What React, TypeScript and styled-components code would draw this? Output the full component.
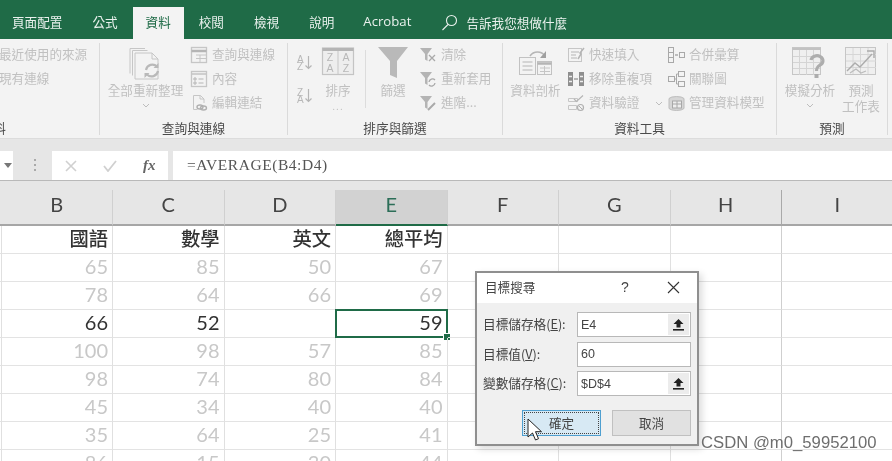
import React from "react";
import styled, { createGlobalStyle } from "styled-components";

const CJK = `"Noto Sans CJK TC", "Noto Sans CJK SC", sans-serif`;
const GREEN = "#1f6b47";
const ICON = "#c6c6c6";

const Global = createGlobalStyle`
  html, body { margin: 0; padding: 0; background: #fff; }
  * { box-sizing: border-box; }
`;

const Screen = styled.div`
  position: relative;
  width: 892px;
  height: 461px;
  overflow: hidden;
  background: #fff;
  font-family: ${CJK};
  filter: blur(0.45px);
`;

/* ---------- tabs ---------- */
const TabBar = styled.div`
  display: flex;
  align-items: flex-end;
  height: 39px;
  background: ${GREEN};
`;
const Tab = styled.div<{ $active?: boolean }>`
  height: ${(p) => (p.$active ? 32 : 39)}px;
  line-height: ${(p) => (p.$active ? 29 : 43)}px;
  padding: 0 ${(p) => (p.$active ? 13 : 15)}px;
  font-size: 12.6px;
  color: ${(p) => (p.$active ? GREEN : "#e9f1ed")};
  background: ${(p) => (p.$active ? "#f3f3f3" : "transparent")};
  white-space: nowrap;
  &:first-child { padding-left: 12px; }
`;
const AcrobatTab = styled(Tab)`
  padding-left: 14px;
  padding-right: 15px;
  font-family: "Open Sans", sans-serif;
  font-size: 13.2px;
`;
const SearchTab = styled.div`
  display: flex;
  align-items: center;
  gap: 8px;
  height: 39px;
  padding: 5px 0 0 15px;
  font-size: 12.6px;
  color: #e9f1ed;
`;

/* ---------- ribbon ---------- */
const Ribbon = styled.div`
  display: flex;
  height: 100px;
  padding-top: 4px;
  background: #f3f3f3;
  border-bottom: 1px solid #dcdcdc;
  overflow: hidden;
`;
const GroupBox = styled.div<{ $w: number; $ml?: number }>`
  flex: none;
  width: ${(p) => p.$w}px;
  margin-left: ${(p) => p.$ml ?? 0}px;
  height: 92px;
  border-right: 1px solid #dadada;
`;
const GroupBody = styled.div`
  display: flex;
  align-items: flex-start;
  height: 77px;
`;
const GroupLabel = styled.div`
  height: 15px;
  line-height: 15px;
  text-align: center;
  font-size: 12.7px;
  color: #4a4a4a;
  white-space: nowrap;
`;
const BigButton = styled.div<{ $w: number; $ml: number }>`
  flex: none;
  display: flex;
  flex-direction: column;
  align-items: center;
  width: ${(p) => p.$w}px;
  margin-left: ${(p) => p.$ml}px;
  padding-top: 4px;
  font-size: 12.6px;
  line-height: 16px;
  color: #c0c0c0;
  white-space: nowrap;
`;
const BigIcon = styled.div`
  display: flex;
  justify-content: center;
  height: 35px;
`;
const BigLine = styled.div`
  text-align: center;
`;
const Chevron = styled.svg`
  display: block;
  margin-top: 5px;
`;
const Dots = styled.div`
  height: 16px;
  letter-spacing: 1px;
  font-size: 10px;
  color: #c0c0c0;
`;
const ToolList = styled.div<{ $ml: number; $w?: number }>`
  flex: none;
  margin-left: ${(p) => p.$ml}px;
  ${(p) => (p.$w ? `width: ${p.$w}px;` : "")}
`;
const ToolRow = styled.div`
  display: flex;
  align-items: center;
  gap: 5px;
  height: 24px;
  padding-bottom: 3px;
  font-size: 12.6px;
  color: #c0c0c0;
  white-space: nowrap;
`;
const ToolIcon = styled.div`
  flex: none;
  display: flex;
  width: 16px;
  height: 16px;
  margin-top: 3px;
`;
const SortColumn = styled.div`
  flex: none;
  display: flex;
  flex-direction: column;
  gap: 18px;
  margin-left: 9px;
  padding-top: 12px;
`;
const Divider = styled.div`
  flex: none;
  width: 1px;
  height: 58px;
  margin: 7px 0 0 11px;
  background: #dcdcdc;
`;
const RowChevron = styled.svg`
  margin: 3px 0 0 11px;
`;

/* ---------- formula bar ---------- */
const FormulaArea = styled.div`
  display: flex;
  height: 42px;
  padding-top: 12px;
  background: #e6e6e6;
  border-bottom: 1px solid #b9b9b9;
`;
const NameBox = styled.div`
  flex: none;
  display: flex;
  align-items: center;
  justify-content: flex-end;
  width: 13px;
  padding-right: 1px;
  background: #fff;
`;
const Grip = styled.div`
  flex: none;
  width: 2px;
  height: 14px;
  margin: 8px 16px 0 21px;
  background: repeating-linear-gradient(#a9a9a9 0 2px, transparent 2px 5px);
`;
const FnBox = styled.div`
  flex: none;
  display: flex;
  align-items: center;
  width: 116px;
  height: 29px;
  padding-left: 13px;
  gap: 26px;
  background: #fff;
`;
const FxLabel = styled.span`
  font-family: "Liberation Serif", serif;
  font-style: italic;
  font-size: 15px;
  font-weight: 700;
  color: #666;
`;
const FormulaInput = styled.div`
  flex: 1;
  height: 29px;
  margin-left: 5px;
  padding-left: 14px;
  background: #fff;
  font-family: "Liberation Serif", serif;
  font-size: 15.5px;
  letter-spacing: 0.55px;
  line-height: 28px;
  color: #555;
  white-space: nowrap;
`;

/* ---------- sheet ---------- */
const columns = "1.5px repeat(8, 111.5px)";
const HeaderRow = styled.div`
  display: grid;
  grid-template-columns: ${columns};
  height: 45px;
  padding-top: 9px;
  background: #e6e6e6;
  border-bottom: 2px solid #a6a6a6;
`;
const HeaderCell = styled.div<{ $active?: boolean; $dark?: boolean }>`
  height: 36px;
  margin-bottom: -2px;
  text-align: center;
  font-family: Lato, sans-serif;
  font-size: 20px;
  line-height: 29px;
  color: ${(p) => (p.$active ? "#2c6e58" : "#444")};
  background: ${(p) => (p.$active ? "#d2d2d2" : "transparent")};
  border-right: 1px solid ${(p) => (p.$dark ? "#a9a9a9" : "#d0d0d0")};
  border-bottom: 2px solid ${(p) => (p.$active ? GREEN : "#a6a6a6")};
`;
const Sheet = styled.div`
  display: grid;
  grid-template-columns: ${columns};
  grid-auto-rows: 28px;
`;
const EdgeCell = styled.div`
  border-right: 1px solid #e0e0e0;
  border-bottom: 1px solid #e3e3e3;
`;
const Cell = styled.div<{ $tone: "title" | "dark" | "dim"; $selected?: boolean; $dark?: boolean }>`
  position: relative;
  padding-right: 4px;
  text-align: right;
  white-space: nowrap;
  font-family: ${(p) => (p.$tone === "title" ? CJK : "Lato, sans-serif")};
  font-size: ${(p) => (p.$tone === "title" ? 19.3 : 20)}px;
  font-weight: ${(p) => (p.$tone === "title" ? 500 : 400)};
  line-height: 24px;
  color: ${(p) => (p.$tone === "dim" ? "#c8c8c8" : "#333")};
  border-right: 1px solid ${(p) => (p.$dark ? "#cfcfcf" : "#e0e0e0")};
  border-bottom: 1px solid #e3e3e3;
  ${(p) =>
    p.$selected
      ? `
    &::before { content: ""; position: absolute; inset: -1px -1px -1px -1px; border: 2px solid ${GREEN}; }
    &::after { content: ""; position: absolute; right: -4px; bottom: -4px; width: 6px; height: 6px; background: ${GREEN}; border: 1px solid #fff; }
  `
      : ""}
`;

/* ---------- dialog ---------- */
const Dialog = styled.div`
  position: absolute;
  left: 475px;
  top: 271px;
  width: 224px;
  height: 175px;
  background: #f0f0f0;
  border: 2px solid #8f8f8f;
  box-shadow: 3px 3px 7px rgba(0, 0, 0, 0.14);
`;
const DialogTitle = styled.div`
  position: relative;
  height: 30px;
  padding-left: 8px;
  background: #fff;
  font-size: 12.6px;
  line-height: 28px;
  color: #444;
`;
const TitleHelp = styled.span`
  position: absolute;
  left: 144px;
  top: 0;
  font-family: "Liberation Sans", sans-serif;
  font-size: 14px;
  color: #444;
`;
const TitleClose = styled.svg`
  position: absolute;
  left: 190px;
  top: 8px;
`;
const DialogForm = styled.div`
  display: flex;
  flex-direction: column;
  gap: 4.5px;
  padding: 9px 6px 0 6px;
`;
const FormRow = styled.div`
  display: flex;
  align-items: center;
  height: 25px;
`;
const FormLabel = styled.div`
  flex: none;
  width: 94px;
  padding-bottom: 2px;
  font-size: 12.7px;
  letter-spacing: -0.05px;
  color: #444;
  white-space: nowrap;
`;
const Field = styled.div`
  flex: 1;
  display: flex;
  align-items: center;
  height: 25px;
  padding: 0 1px 0 3px;
  background: #fff;
  border: 1px solid #b8b8b8;
  font-family: "Liberation Sans", sans-serif;
  font-size: 12.5px;
  color: #444;
`;
const FieldText = styled.span`
  flex: 1;
`;
const RefButton = styled.div`
  flex: none;
  display: flex;
  align-items: center;
  justify-content: center;
  width: 21px;
  height: 21px;
  background: #ececec;
`;
const DialogButtons = styled.div`
  display: flex;
  justify-content: flex-end;
  gap: 11px;
  margin-top: 14px;
  padding-right: 6px;
`;
const DialogButton = styled.div<{ $primary?: boolean }>`
  position: relative;
  width: 79px;
  height: 26px;
  text-align: center;
  font-size: 12.6px;
  line-height: 24px;
  color: #444;
  background: ${(p) => (p.$primary ? "#d7e9f4" : "#e1e1e1")};
  border: ${(p) => (p.$primary ? "1.5px solid #4f9fd0" : "1px solid #c0c0c0")};
  ${(p) =>
    p.$primary
      ? `&::before { content: ""; position: absolute; inset: 1px; border: 1px dotted #444; }`
      : ""}
`;
const Pointer = styled.svg`
  position: absolute;
  left: 527px;
  top: 418px;
`;
const Watermark = styled.div`
  position: absolute;
  left: 701px;
  top: 433px;
  font-family: "Liberation Sans", sans-serif;
  font-size: 16.7px;
  line-height: 20px;
  color: #6e6e6e;
  text-shadow: 0 0 2px #fff;
  white-space: nowrap;
`;

/* ---------- icons ---------- */
const Svg = ({ w = 16, h = 16, children }: { w?: number; h?: number; children: React.ReactNode }) => (
  <svg width={w} height={h} viewBox={`0 0 ${w} ${h}`} fill="none" stroke={ICON} strokeWidth="1" overflow="visible">
    {children}
  </svg>
);
const Chev = () => (
  <Chevron width="8" height="5" viewBox="0 0 8 5" fill="none" stroke="#bdbdbd">
    <path d="M1 1l3 3 3-3" />
  </Chevron>
);
const RefreshIcon = () => (
  <Svg w={34} h={35}>
    <path d="M1 1.5h15M1 1.5v25M3.5 3.5h15M3.5 3.5v25M6 6h17l6 6v20H6z" fill="#f3f3f3" />
    <path d="M23 6v6h6" />
    <path d="M17 23a6.500 6.500 0 0 1 11-3.500M29 24a6.500 6.500 0 0 1-11 3.500" stroke="#b9b9b9" strokeWidth="2.2" />
    <path d="M29.500 16v5h-5zM15.500 31v-5h5z" fill="#b9b9b9" stroke="none" />
  </Svg>
);
const QueryIcon = () => (
  <Svg>
    <rect x=".5" y=".5" width="15" height="15" strokeWidth="1.3" />
    <path d="M.5 4h15" stroke="#b5b5b5" strokeWidth="2.5" />
    <path d="M5 8h10M5 11.5h10M9 8v7" />
  </Svg>
);
const PropsIcon = () => (
  <Svg>
    <rect x=".5" y=".5" width="15" height="15" strokeWidth="1.3" />
    <path d="M1 3h14" strokeWidth="1.6" />
    <path d="M3 7h2v2H3zM3 11h2v2H3zM7.5 8h5M7.5 12h5" stroke="#b5b5b5" />
  </Svg>
);
const LinkIcon = () => (
  <Svg>
    <path d="M2.5.5h7l3.5 3.5v4M2.5.5v14h4" />
    <path d="M9 .5V4h4" />
    <ellipse cx="9" cy="12" rx="3" ry="2" stroke="#b0b0b0" strokeWidth="1.4" />
    <ellipse cx="12.5" cy="13" rx="3" ry="2" stroke="#b0b0b0" strokeWidth="1.4" />
  </Svg>
);
const sortText = { fontFamily: "Liberation Sans, sans-serif", fontSize: 10, fill: "#b8b8b8", stroke: "none" };
const SortIcon = ({ top, bottom }: { top: string; bottom: string }) => (
  <Svg w={17} h={15}>
    <text x="0" y="7.5" style={sortText}>{top}</text>
    <text x="0" y="15" style={sortText}>{bottom}</text>
    <path d="M11.5 1v12.500M8.500 10.500l3 3 3-3" stroke="#b5b5b5" strokeWidth="1.2" />
  </Svg>
);
const SortBoxIcon = () => (
  <Svg w={32} h={28}>
    <rect x=".5" y="1" width="31" height="26.5" fill="#eee" stroke="#c4c4c4" strokeWidth="1.2" />
    <path d="M.5 2.500h31" stroke="#b5b5b5" strokeWidth="3" />
    <path d="M16 4v23" />
    <text x="8" y="14" textAnchor="middle" style={{ ...sortText, fontSize: 10.5 }}>Z</text>
    <text x="8" y="25" textAnchor="middle" style={{ ...sortText, fontSize: 10.5 }}>A</text>
    <text x="24" y="14" textAnchor="middle" style={{ ...sortText, fontSize: 10.5 }}>A</text>
    <text x="24" y="25" textAnchor="middle" style={{ ...sortText, fontSize: 10.5 }}>Z</text>
  </Svg>
);
const FunnelIcon = () => (
  <Svg w={30} h={31}>
    <path d="M0 0h30L19 14v17l-7-3V14z" fill="#b9b9b9" stroke="none" />
  </Svg>
);
const SmallFunnel = ({ children }: { children: React.ReactNode }) => (
  <Svg>
    <path d="M0 1h12L7.500 7v7L5 12.500V7z" fill="#b4b4b4" stroke="none" />
    {children}
  </Svg>
);
const TextToColumnsIcon = () => (
  <Svg w={33} h={28}>
    <path d="M11 9a9 9 0 0 1 15 0" stroke="#b5b5b5" strokeWidth="1.6" />
    <path d="M27 4v7h-6z" fill="#9f9f9f" stroke="none" />
    <rect x=".5" y="10.5" width="16" height="17" fill="#f3f3f3" stroke="#c2c2c2" />
    <path d="M3.500 15h10M3.500 19h10M3.500 23h10" stroke="#b5b5b5" />
    <rect x="18.5" y="14.5" width="14" height="13" stroke="#c2c2c2" />
    <path d="M18.500 16.500h14" stroke="#b5b5b5" strokeWidth="2.5" />
    <path d="M21 21h10M21 24.500h10M25.500 19v8" />
  </Svg>
);
const FlashFillIcon = () => (
  <Svg>
    <rect x=".5" y="1.5" width="13" height="13" />
    <path d="M3 5h8M3 8h5M3 11h6" stroke="#b5b5b5" />
    <path d="M16 1l-4 5 1 1-3 5" stroke="#b5b5b5" strokeWidth="1.5" />
  </Svg>
);
const DupesIcon = () => (
  <Svg>
    <rect x="0" y="1" width="5" height="14" fill="#8e8e8e" stroke="none" />
    <rect x="11" y="1" width="5" height="14" fill="#8e8e8e" stroke="none" />
    <path d="M1 5.500h3M1 10.500h3M12 5.500h3M12 10.500h3" stroke="#eee" strokeWidth="1.5" />
    <path d="M6 8h4" stroke="#9a9a9a" strokeWidth="1.4" />
  </Svg>
);
const ValidateIcon = () => (
  <Svg>
    <path d="M.5 3.500h9v3h-9zM.5 10.500h8v4h-8z" />
    <path d="M6 4l2.500 2.500L15 .5" stroke="#b5b5b5" strokeWidth="1.2" />
    <circle cx="12.5" cy="12.5" r="3" stroke="#b0b0b0" strokeWidth="1.2" />
    <path d="M10.500 10.500l4 4" stroke="#b0b0b0" />
  </Svg>
);
const ConsolidateIcon = () => (
  <Svg w={17} h={16}>
    <rect x=".5" y=".5" width="5" height="15" stroke="#a8a8a8" />
    <path d="M1 5.500h4M1 10.500h4" stroke="#a8a8a8" />
    <path d="M7 8h3" stroke="#999" strokeWidth="1.2" />
    <rect x="11.5" y="5.5" width="5" height="5" stroke="#a8a8a8" />
  </Svg>
);
const RelationIcon = () => (
  <Svg w={17} h={16}>
    <rect x=".5" y="5.5" width="6" height="5" stroke="#a8a8a8" />
    <rect x="10.5" y=".5" width="6" height="5" stroke="#a8a8a8" />
    <rect x="10.5" y="10.5" width="6" height="5" stroke="#a8a8a8" />
    <path d="M6.500 8h2v-5h2M8.500 8v5h2" stroke="#a8a8a8" />
  </Svg>
);
const ModelIcon = () => (
  <Svg w={17} h={17}>
    <path d="M1 3.500a8 3 0 0 1 15 0v10a8 3 0 0 1-15 0z" fill="#d6d6d6" stroke="#bcbcbc" />
    <rect x="4.5" y="6" width="9" height="7" fill="#eee" stroke="#a8a8a8" />
    <path d="M4.500 9h9M9 6v7" stroke="#a8a8a8" />
  </Svg>
);
const WhatIfIcon = () => (
  <Svg w={36} h={33}>
    <rect x=".5" y=".5" width="28" height="27" fill="#efefef" stroke="#c6c6c6" />
    <path d="M.5 2h28" stroke="#c2c2c2" strokeWidth="2" />
    <path d="M7.500 3v25M14.500 3v25M21.500 3v25M1 9.500h27M1 15.500h27M1 21.500h27" stroke="#d4d4d4" />
    <path d="M19 13a6 5 0 1 1 9 5c-3 2-3.500 3-3.500 6" stroke="#adadad" strokeWidth="3.2" />
    <rect x="22.5" y="27" width="4" height="4" fill="#adadad" stroke="none" />
  </Svg>
);
const ForecastIcon = () => (
  <Svg w={32} h={28}>
    <rect x=".5" y=".5" width="30" height="27" fill="#efefef" stroke="#c6c6c6" />
    <path d="M8 1v26M15.500 1v26M23 1v26M1 7.500h30M1 14h30M1 20.500h30" stroke="#d6d6d6" />
    <path d="M2 24l8-8 5 4 12-13" stroke="#acacac" strokeWidth="1.4" />
    <path d="M22 4h7v7" stroke="#acacac" strokeWidth="1.4" />
    <path d="M5 26l6-4 5 4 5-2" stroke="#bbb" strokeWidth="1.2" />
  </Svg>
);

/* ---------- data ---------- */
const heads = ["B", "C", "D", "E", "F", "G", "H", "I"];
const titles = ["國語", "數學", "英文", "總平均"];
const rows = [
  ["65", "85", "50", "67"],
  ["78", "64", "66", "69"],
  ["66", "52", "", "59"],
  ["100", "98", "57", "85"],
  ["98", "74", "80", "84"],
  ["45", "34", "40", "40"],
  ["35", "64", "25", "41"],
  ["86", "15", "30", "44"],
];

const Group = ({ w, ml, label, children }: { w: number; ml?: number; label: string; children: React.ReactNode }) => (
  <GroupBox $w={w} $ml={ml}>
    <GroupBody>{children}</GroupBody>
    <GroupLabel>{label}</GroupLabel>
  </GroupBox>
);

const Tool = ({ icon, children }: { icon: React.ReactNode; children: React.ReactNode }) => (
  <ToolRow>
    <ToolIcon>{icon}</ToolIcon>
    {children}
  </ToolRow>
);

const UpArrow = () => (
  <svg width="11" height="12" viewBox="0 0 11 12">
    <path d="M5.500 0L10.500 5H7.500V8.500H3.500V5H.5z" fill="#222" />
    <rect x="0" y="10" width="11" height="1.6" fill="#222" />
  </svg>
);

const GridRow = ({ cells, tone }: { cells: string[]; tone: "title" | "dark" | "dim" }) => (
  <>
    <EdgeCell />
    {cells.map((c, i) => (
      <Cell key={i} $tone={tone} $selected={tone === "dark" && i === 3}>
        {c}
      </Cell>
    ))}
    {[4, 5, 6, 7].map((i) => (
      <Cell key={i} $tone="dim" $dark={i === 6} />
    ))}
  </>
);

export default function App() {
  return (
    <Screen>
      <Global />
      <TabBar>
        <Tab>頁面配置</Tab>
        <Tab>公式</Tab>
        <Tab $active>資料</Tab>
        <Tab>校閱</Tab>
        <Tab>檢視</Tab>
        <Tab>說明</Tab>
        <AcrobatTab>Acrobat</AcrobatTab>
        <SearchTab>
          <svg width="17" height="17" viewBox="0 0 17 17" fill="none" stroke="#e9f1ed" strokeWidth="1.1">
            <circle cx="10.5" cy="6.5" r="5" />
            <path d="M7 10.500L1.500 16" />
          </svg>
          告訴我您想做什麼
        </SearchTab>
      </TabBar>

      <Ribbon>
        <Group w={276} ml={-176} label="取得及轉換資料">
          <ToolList $ml={175}>
            <ToolRow>最近使用的來源</ToolRow>
            <ToolRow>現有連線</ToolRow>
          </ToolList>
        </Group>
        <Group w={188} label="查詢與連線">
          <BigButton $w={77} $ml={7}>
            <BigIcon><RefreshIcon /></BigIcon>
            全部重新整理
            <Chev />
          </BigButton>
          <ToolList $ml={7}>
            <Tool icon={<QueryIcon />}>查詢與連線</Tool>
            <Tool icon={<PropsIcon />}>內容</Tool>
            <Tool icon={<LinkIcon />}>編輯連結</Tool>
          </ToolList>
        </Group>
        <Group w={215} label="排序與篩選">
          <SortColumn>
            <SortIcon top="A" bottom="Z" />
            <SortIcon top="Z" bottom="A" />
          </SortColumn>
          <BigButton $w={32} $ml={8}>
            <BigIcon><SortBoxIcon /></BigIcon>
            排序
            <Dots>...</Dots>
          </BigButton>
          <Divider />
          <BigButton $w={30} $ml={12}>
            <BigIcon><FunnelIcon /></BigIcon>
            篩選
          </BigButton>
          <ToolList $ml={12}>
            <Tool icon={<SmallFunnel><path d="M9 8l6 6M15 8l-6 6" stroke="#a9a9a9" strokeWidth="1.3" /></SmallFunnel>}>清除</Tool>
            <Tool icon={<SmallFunnel><path d="M9 11a3.500 3.500 0 0 1 6-2M15 12a3.500 3.500 0 0 1-6 2" stroke="#a9a9a9" strokeWidth="1.3" /></SmallFunnel>}>重新套用</Tool>
            <Tool icon={<SmallFunnel><path d="M8 15l7-7" stroke="#a9a9a9" strokeWidth="2" /></SmallFunnel>}>進階...</Tool>
          </ToolList>
        </Group>
        <Group w={274} label="資料工具">
          <BigButton $w={51} $ml={7}>
            <BigIcon><TextToColumnsIcon /></BigIcon>
            資料剖析
          </BigButton>
          <ToolList $ml={7} $w={100}>
            <Tool icon={<FlashFillIcon />}>快速填入</Tool>
            <Tool icon={<DupesIcon />}>移除重複項</Tool>
            <Tool icon={<ValidateIcon />}>
              資料驗證
              <RowChevron width="8" height="5" viewBox="0 0 8 5" fill="none" stroke="#bdbdbd">
                <path d="M1 1l3 3 3-3" />
              </RowChevron>
            </Tool>
          </ToolList>
          <ToolList $ml={0}>
            <Tool icon={<ConsolidateIcon />}>合併彙算</Tool>
            <Tool icon={<RelationIcon />}>關聯圖</Tool>
            <Tool icon={<ModelIcon />}>管理資料模型</Tool>
          </ToolList>
        </Group>
        <Group w={111} label="預測">
          <BigButton $w={50} $ml={8}>
            <BigIcon><WhatIfIcon /></BigIcon>
            模擬分析
            <Chev />
          </BigButton>
          <BigButton $w={38} $ml={7}>
            <BigIcon><ForecastIcon /></BigIcon>
            <BigLine>預測</BigLine>
            <BigLine>工作表</BigLine>
          </BigButton>
        </Group>
      </Ribbon>

      <FormulaArea>
        <NameBox>
          <svg width="8" height="5" viewBox="0 0 8 5"><path d="M0 0h8L4 5z" fill="#777" /></svg>
        </NameBox>
        <Grip />
        <FnBox>
          <svg width="12" height="12" viewBox="0 0 12 12" fill="none" stroke="#d0d0d0" strokeWidth="1.6">
            <path d="M1 1l10 10M11 1L1 11" />
          </svg>
          <svg width="14" height="12" viewBox="0 0 14 12" fill="none" stroke="#d0d0d0" strokeWidth="1.8">
            <path d="M1 6l4 5 8-10" />
          </svg>
          <FxLabel>fx</FxLabel>
        </FnBox>
        <FormulaInput>=AVERAGE(B4:D4)</FormulaInput>
      </FormulaArea>

      <HeaderRow>
        <div />
        {heads.map((h) => (
          <HeaderCell key={h} $active={h === "E"} $dark={h === "H"}>
            {h}
          </HeaderCell>
        ))}
      </HeaderRow>

      <Sheet>
        <GridRow cells={titles} tone="title" />
        {rows.map((r, i) => (
          <GridRow key={i} cells={r} tone={i === 2 ? "dark" : "dim"} />
        ))}
      </Sheet>

      <Dialog>
        <DialogTitle>
          目標搜尋
          <TitleHelp>?</TitleHelp>
          <TitleClose width="13" height="13" viewBox="0 0 13 13" fill="none" stroke="#333" strokeWidth="1.1">
            <path d="M1 1l11 11M12 1L1 12" />
          </TitleClose>
        </DialogTitle>
        <DialogForm>
          <FormRow>
            <FormLabel>目標儲存格(<u>E</u>):</FormLabel>
            <Field>
              <FieldText>E4</FieldText>
              <RefButton><UpArrow /></RefButton>
            </Field>
          </FormRow>
          <FormRow>
            <FormLabel>目標值(<u>V</u>):</FormLabel>
            <Field>
              <FieldText>60</FieldText>
            </Field>
          </FormRow>
          <FormRow>
            <FormLabel>變數儲存格(<u>C</u>):</FormLabel>
            <Field>
              <FieldText>$D$4</FieldText>
              <RefButton><UpArrow /></RefButton>
            </Field>
          </FormRow>
        </DialogForm>
        <DialogButtons>
          <DialogButton $primary>確定</DialogButton>
          <DialogButton>取消</DialogButton>
        </DialogButtons>
      </Dialog>

      <Pointer width="15" height="24" viewBox="0 0 15 24">
        <path d="M1 1v18l4.500-4 3 7 3-1.300-3-7h6z" fill="#fff" stroke="#222" strokeWidth="1" />
      </Pointer>

      <Watermark>CSDN @m0_59952100</Watermark>
    </Screen>
  );
}
